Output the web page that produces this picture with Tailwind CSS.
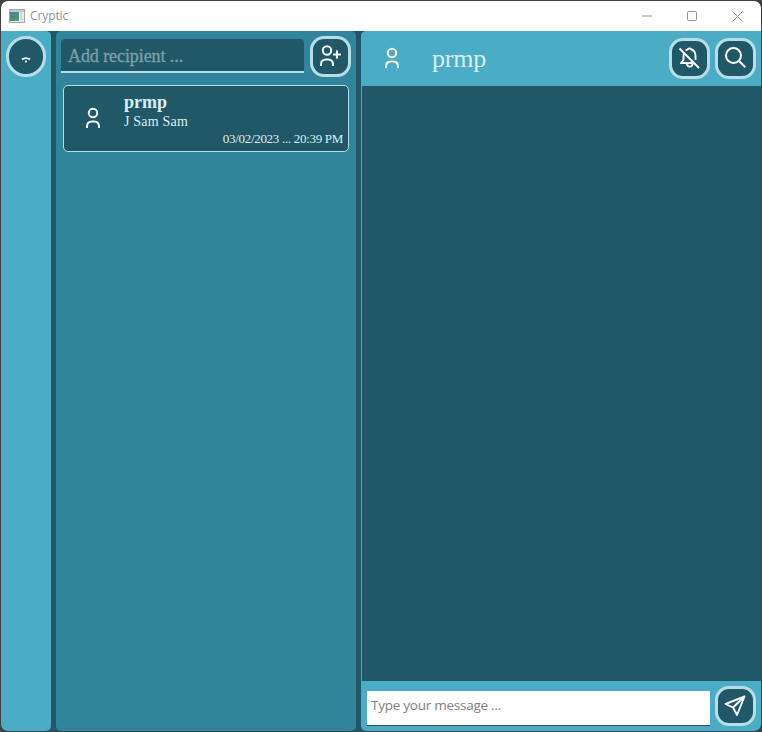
<!DOCTYPE html>
<html lang="en"><head><meta charset="utf-8"><title>Cryptic</title>
<script src="https://cdn.jsdelivr.net/npm/@tailwindcss/browser@4"></script></head>
<body class="w-[762px] h-[732px] overflow-hidden bg-[#414042] p-px font-['Liberation_Serif',serif] text-[#daeef3]">
<div class="w-[760px] h-[730px] rounded-[7px] overflow-hidden bg-[#205867] flex flex-col">
  <header class="h-[30px] shrink-0 bg-white flex items-center pl-2 text-[#929292]">
    <svg class="shrink-0 -mt-px" width="16" height="14" viewBox="0 0 16 14"><defs><linearGradient id="g" x2="1" y2="1"><stop stop-color="#3e7fa8"/><stop offset="1" stop-color="#58a06a"/></linearGradient></defs><path fill="#a5a5a5" d="M0 0h16v14H0z"/><path fill="#eef0f2" d="M1 1h14v12H1z"/><path fill="#c5cad0" d="M1 1h14v2H1z"/><path fill="url(#g)" d="M1 3h9v9H1z"/><path fill="#d2dde5" d="M11 3h3v9h-3z"/></svg>
    <span class="ml-[5px] font-['Open_Sans',sans-serif] text-[12px] leading-4 tracking-[-0.1px]">Cryptic</span>
    <div class="ml-auto mr-[17px] flex gap-[35px] items-center">
      <svg class="-ml-px" width="10" height="10" stroke="currentColor"><path d="M0 5h10"/></svg>
      <svg width="10" height="10" fill="none" stroke="currentColor"><rect x=".5" y=".5" width="9" height="9" rx="1"/></svg>
      <svg class="mr-px" width="11" height="11" stroke="currentColor"><path d="M.5.5l10 10M10.500.5l-10 10"/></svg>
    </div>
  </header>
  <div class="flex-1 min-h-0 flex gap-[5px]">
    <nav class="w-[50px] rounded-[5px] rounded-tl-none bg-[#4bacc6] pt-[5px] pl-[5px]">
      <div class="w-10 h-[41px] rounded-full border-3 border-[#b7dde8] bg-[#205867] flex items-center justify-center">
        <svg class="mt-[7px]" width="10" height="8" viewBox="0 0 10 8" fill="none" stroke="white" stroke-width="1.900"><path d="M1 3.600Q5 .6 9 3.600"/><circle cx="5" cy="5.500" r="1.100" fill="white" stroke="none"/></svg>
      </div>
    </nav>
    <aside class="w-[300px] rounded-[5px] bg-[#31859b] flex flex-col">
      <div class="flex pt-[5px] pl-[5px]">
        <div class="mt-[3px] w-[243px] h-[34px] rounded-t-[4px] border-b-2 border-[#b7dde8] bg-[#205867] pl-[7px] text-[18px] leading-[34px] tracking-[-0.08px] text-[#7b9fa9] [-webkit-text-stroke:0.35px_#7b9fa9]">Add recipient ...</div>
        <div class="ml-[6px] w-[41px] h-[41px] rounded-[14px] border-3 border-[#b7dde8] bg-[#205867]">
          <svg width="35" height="35" fill="none" stroke="white" stroke-width="2"><circle cx="14" cy="11.500" r="4.200"/><path d="M8 27v-1.500q0-5 5-5h2q5 0 5 5V27M20 15.500h8M24 11.500v8"/></svg>
        </div>
      </div>
      <div class="mt-2 ml-[7px] w-[286px] h-[67px] rounded-[5px] border border-[#b7dde8] bg-[#205867] flex">
        <svg class="mt-[21px] ml-[21px] shrink-0" width="16" height="24" fill="none" stroke="white" stroke-width="2"><circle cx="8" cy="6" r="4.200"/><path d="M2 21v-1.500q0-5 5-5h2q5 0 5 5V21"/></svg>
        <div class="ml-[23px] pt-[6px] flex-1">
          <div class="text-[18px] leading-5 font-bold">prmp</div>
          <div class="text-[14px] leading-[19px] tracking-[0.2px]">J Sam Sam</div>
          <div class="text-right pr-[5px] text-[13px] leading-[15px] tracking-[-0.3px]">03/02/2023 ... 20:39 PM</div>
        </div>
      </div>
    </aside>
    <main class="w-[400px] rounded-[5px] rounded-tr-none bg-[#4bacc6] flex flex-col">
      <div class="h-[55px] shrink-0 flex pr-[5px]">
        <svg class="mt-4 ml-[23px] shrink-0" width="16" height="24" fill="none" stroke="white" stroke-width="2"><circle cx="8" cy="6" r="4.200"/><path d="M2 21v-1.500q0-5 5-5h2q5 0 5 5V21"/></svg>
        <div class="ml-8 text-[26px] leading-[55px] tracking-[-0.2px]">prmp</div>
        <div class="ml-auto mt-[7px] flex gap-[5px]">
          <div class="w-[41px] h-[41px] rounded-[14px] border-3 border-[#b7dde8] bg-[#205867]"><svg width="35" height="35" fill="none" stroke="white" stroke-width="1.900" stroke-linejoin="round"><path d="M7.500 7.500l19.500 19.500M13.500 9.500l2-1q2-2.200 4 0 4 1.500 4 6.500v4M12 12.500q-.5 1-.5 2.500v4L9 22h13.500M14.800 22q.3 3.700 3 3.700t3-3.700"/></svg></div>
          <div class="w-[41px] h-[41px] rounded-[14px] border-3 border-[#b7dde8] bg-[#205867]"><svg width="35" height="35" fill="none" stroke="white" stroke-width="2"><circle cx="15.500" cy="14.500" r="7.500"/><path d="M21 20l6.300 6.300"/></svg></div>
        </div>
      </div>
      <div class="flex-1 ml-px bg-[#205867]"></div>
      <div class="h-[50px] shrink-0 flex pl-[6px] pt-[5px]">
        <div class="mt-[5px] w-[343px] h-[35px] bg-white border-b border-[#205867] pl-1 font-['Open_Sans',sans-serif] text-[13.500px] leading-[29px] tracking-[-0.25px] text-[#808080]">Type your message ...</div>
        <div class="ml-[5px] w-[41px] h-[40px] rounded-[14px] border-3 border-[#b7dde8] bg-[#205867]"><svg width="35" height="34" fill="none" stroke="white" stroke-width="1.900" stroke-linejoin="round"><path d="M26.500 7.500L7.500 15l7.500 3.500 4 7.500zM15 18.500L26.500 7.500"/></svg></div>
      </div>
    </main>
  </div>
</div>
</body></html>
